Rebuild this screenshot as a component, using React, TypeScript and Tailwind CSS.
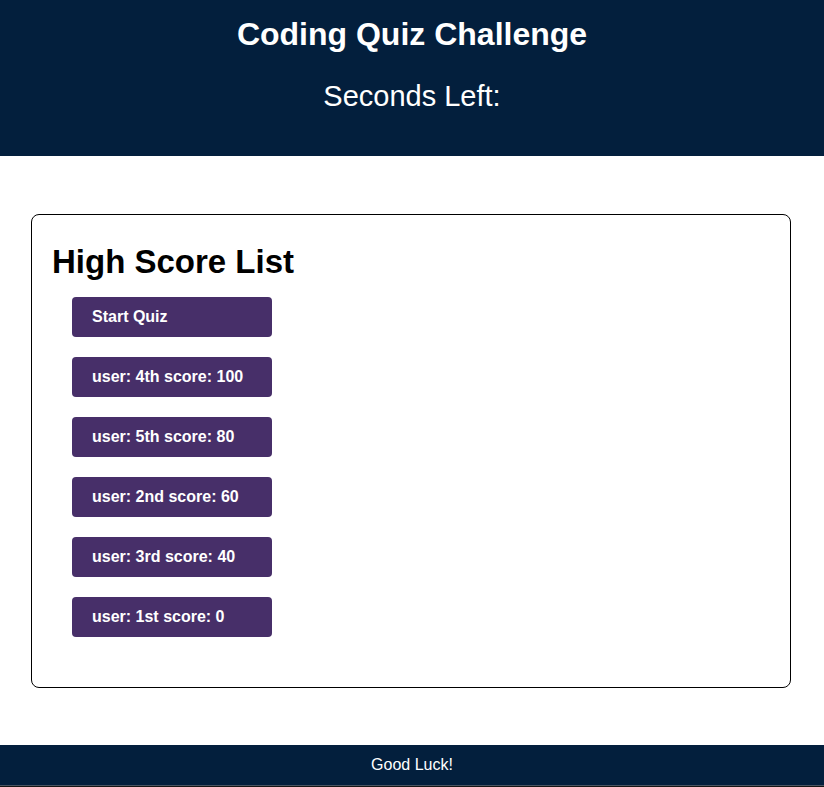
const scores = [
  "user: 4th score: 100",
  "user: 5th score: 80",
  "user: 2nd score: 60",
  "user: 3rd score: 40",
  "user: 1st score: 0",
]

function QuizButton({ label }: { label: string }) {
  return (
    <button className="w-[200px] h-10 rounded-[4px] bg-[#472f69] pl-5 text-left text-[16px] font-bold text-white">
      {label}
    </button>
  )
}

export default function App() {
  return (
    <div className="min-h-[787px] bg-white font-['Liberation_Sans',Arial,sans-serif] text-black">
      <header className="h-[156px] bg-[#031f3d] pt-4 text-center text-white">
        <h1 className="text-[32px] font-bold leading-[37px]">Coding Quiz Challenge</h1>
        <p className="mt-[27px] text-[29px] leading-[33px]">Seconds Left:</p>
      </header>

      <main className="pt-[58px] pb-[57px] pl-[31px] pr-[33px]">
        <section className="rounded-lg border border-black px-5 pt-5 pb-[50px]">
          <h2 className="mt-2 text-[33px] font-bold leading-[37px]">High Score List</h2>
          <div className="mt-[17px] ml-5 flex flex-col gap-5">
            <QuizButton label="Start Quiz" />
            {scores.map((s) => (
              <QuizButton key={s} label={s} />
            ))}
          </div>
        </section>
      </main>

      <footer className="h-[41px] border-b border-[#4a5563] bg-[#031f3d] text-center text-[16px] leading-10 text-white">
        Good Luck!
      </footer>
      <div className="h-px bg-[#161616]" />
    </div>
  )
}
